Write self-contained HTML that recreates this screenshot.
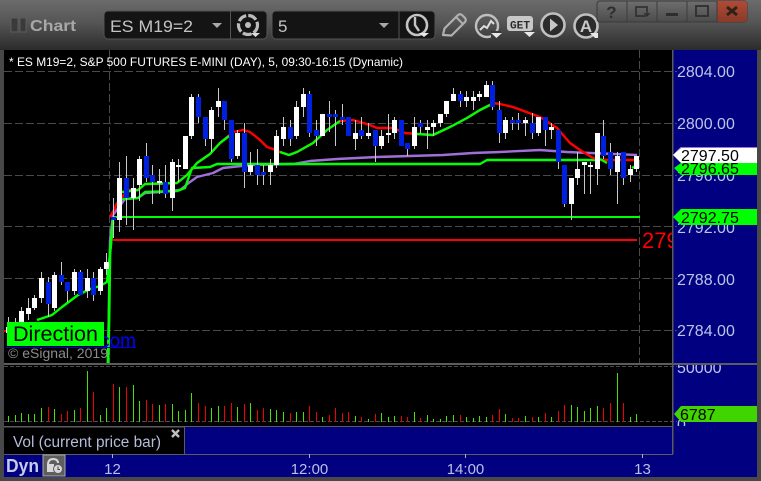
<!DOCTYPE html>
<html>
<head>
<meta charset="utf-8">
<style>
html,body{margin:0;padding:0;width:761px;height:481px;overflow:hidden;background:#3c3c3c}
svg{display:block;font-family:"Liberation Sans",sans-serif}
</style>
</head>
<body>
<svg id="s" xmlns="http://www.w3.org/2000/svg" width="761" height="481" viewBox="0 0 761 481">
<defs>
<linearGradient id="tb" x1="0" y1="0" x2="0" y2="1"><stop offset="0" stop-color="#6c6c6c"/><stop offset="0.45" stop-color="#555"/><stop offset="1" stop-color="#2b2b2b"/></linearGradient>
<linearGradient id="wb" x1="0" y1="0" x2="0" y2="1"><stop offset="0" stop-color="#6e6e6e"/><stop offset="1" stop-color="#4c4c4c"/></linearGradient>
<linearGradient id="cb" x1="0" y1="0" x2="0" y2="1"><stop offset="0" stop-color="#b24a34"/><stop offset="1" stop-color="#8a3a2a"/></linearGradient>
<clipPath id="cp"><rect x="4" y="50" width="668" height="313"/></clipPath>
<clipPath id="ax"><rect x="673" y="50" width="84" height="313"/></clipPath>
<clipPath id="ax2"><rect x="673" y="365" width="84" height="61"/></clipPath>
</defs>
<rect width="761" height="481" fill="#484848"/>
<rect x="0" y="0" width="761" height="50" fill="url(#tb)"/>
<!-- title -->
<rect x="11" y="18" width="7" height="14" fill="#3a3a3a" stroke="#5c5c5c"/>
<rect x="20" y="18" width="6" height="14" fill="#3a3a3a" stroke="#5c5c5c"/>
<text x="30" y="31" font-size="16" font-weight="bold" fill="#a8a8a8" textLength="46" lengthAdjust="spacingAndGlyphs">Chart</text>
<!-- symbol box -->
<rect x="104" y="11" width="163" height="28" rx="4" fill="#141414" stroke="#555"/>
<line x1="230.500" y1="11" x2="230.500" y2="39" stroke="#555"/>
<text x="110" y="32" font-size="17" fill="#c4c4c4" textLength="83" lengthAdjust="spacingAndGlyphs">ES M19=2</text>
<path d="M212 23h10l-5 5z" fill="#a8a8a8"/>
<circle cx="248" cy="25" r="9.500" fill="none" stroke="#bcbcbc" stroke-width="3.200" stroke-dasharray="9 2.200"/>
<circle cx="248" cy="25" r="3" fill="#bcbcbc"/>
<path d="M251 33h9l-4.500 4z" fill="#ddd"/>
<!-- interval box -->
<rect x="272" y="11" width="163" height="28" rx="4" fill="#141414" stroke="#555"/>
<line x1="399" y1="11" x2="399" y2="39" stroke="#555"/>
<text x="278" y="32" font-size="17" fill="#c4c4c4">5</text>
<path d="M379 23h10l-5 5z" fill="#a8a8a8"/>
<!-- clock -->
<circle cx="417" cy="25" r="10" fill="none" stroke="#c4c4c4" stroke-width="2.600"/>
<path d="M415 17v8l4 6" fill="none" stroke="#c4c4c4" stroke-width="2.400"/>
<path d="M419 33h10l-5 4z" fill="#e8e8e8"/>
<!-- pencil -->
<path d="M443 35l1.500-6.500L458 15q2-1.500 4 0l3 3q1.500 2 0 4L451.500 35.500z" fill="none" stroke="#b0b0b0" stroke-width="2.200" stroke-linejoin="round"/>
<path d="M456 17l7 7" stroke="#b0b0b0" stroke-width="2"/>
<!-- chart circle -->
<circle cx="487" cy="26" r="11" fill="none" stroke="#c0c0c0" stroke-width="2.400"/>
<path d="M480 30l4-4 3 2 4-7 3 3" fill="none" stroke="#ddd" stroke-width="2"/>
<rect x="491" y="31" width="10" height="7" fill="#3a3a3a"/>
<path d="M491 33h11l-5.500 5z" fill="#e8e8e8"/>
<!-- GET -->
<rect x="507" y="16" width="26" height="15" rx="3" fill="#c8c8c8"/>
<text x="510" y="28.500" font-size="11" font-weight="bold" font-family="Liberation Mono" fill="#2c2c2c" textLength="20" lengthAdjust="spacingAndGlyphs">GET</text>
<path d="M524 32h11l-5.500 5z" fill="#e8e8e8"/>
<!-- play -->
<circle cx="553" cy="25" r="11.500" fill="#2c2c2c" stroke="#c0c0c0" stroke-width="2.600"/>
<path d="M550 18.500l8 6.500-8 6.500z" fill="#c8c8c8"/>
<!-- A -->
<circle cx="586" cy="26" r="11.500" fill="#2c2c2c" stroke="#c0c0c0" stroke-width="2.600"/>
<text x="586" y="32" font-size="17" font-weight="bold" text-anchor="middle" fill="#c8c8c8">A</text>
<path d="M590 33h8v5h-3z" fill="#e8e8e8"/>
<!-- window buttons -->
<rect x="597" y="1" width="150" height="21" rx="3" fill="url(#wb)" stroke="#3a3a3a"/>
<path d="M717 1h27q3 0 3 3v15q0 3-3 3h-27z" fill="url(#cb)"/>
<path d="M627 1v21M657 1v21M687 1v21M717 1v21" stroke="#3c3c3c"/>
<text x="611.500" y="18" font-size="17" font-weight="bold" fill="#2e2e2e" text-anchor="middle">?</text>
<rect x="636" y="7" width="11" height="9" fill="none" stroke="#2e2e2e" stroke-width="1.600"/>
<path d="M643 13h8l-4 4z" fill="#2e2e2e" stroke="#555" stroke-width="0.500"/>
<rect x="666" y="13" width="12" height="3" fill="#2e2e2e"/>
<rect x="696" y="6" width="12" height="10" fill="none" stroke="#2e2e2e" stroke-width="1.800"/>
<path d="M727 7l10 8M737 7l-10 8" stroke="#2e2216" stroke-width="3"/>

<!-- chart -->
<rect x="4" y="50" width="669" height="313" fill="#000"/>
<rect x="673" y="50" width="84" height="404" fill="#000080"/>
<g id="grid" stroke="#4a4a4a" stroke-width="1" stroke-dasharray="8 3" shape-rendering="crispEdges">
<line x1="4" y1="71.500" x2="677" y2="71.500"/>
<line x1="4" y1="123.500" x2="677" y2="123.500"/>
<line x1="4" y1="175.500" x2="677" y2="175.500"/>
<line x1="4" y1="226.500" x2="677" y2="226.500"/>
<line x1="4" y1="278.500" x2="677" y2="278.500"/>
<line x1="4" y1="330.500" x2="677" y2="330.500"/>
<line x1="109.500" y1="50" x2="109.500" y2="363"/>
<line x1="639.500" y1="50" x2="639.500" y2="363"/>
</g>
<text x="9" y="66" font-size="12" fill="#ffffff" textLength="394" lengthAdjust="spacingAndGlyphs">* ES M19=2, S&amp;P 500 FUTURES E-MINI (DAY), 5, 09:30-16:15 (Dynamic)</text>
<g fill="none" stroke-linejoin="round" clip-path="url(#cp)">
<polyline stroke="#a070d8" stroke-width="2.400" points="108,363 109,300 110,240 113,215 122,203 125,199 138,198 145,193 160,192 180,190 190,182 197,177 213,173 223,168 250,165 293,164 310,161 337,159 377,157 410,156 443,155 473,153 500,152 540,150 567,152 637,155"/>
<polyline stroke="#00ff00" stroke-width="2.400" points="122,199 138,198 145,192 177,191 185,188 192,168 210,167 217,164 250,164 480,164 487,160 600,160"/>
<polyline stroke="#ff0000" stroke-width="2.400" points="110,217 115,208 117,203 128,190 138,190 145,184 177,183 187,175 197,163 210,154 220,143 233,132 243,130 250,132 260,140 267,147 273,149 280,152 289,155 297,152 313,143 327,130 340,121 353,120 370,125 377,128 393,128 405,133 417,134 433,135 450,127 467,118 480,110 493,103 500,104 513,107 540,117 557,128 570,143 580,150 593,158 600,160 637,160"/>
<polyline stroke="#00ff00" stroke-width="2.400" points="37,320 52,315 62,307 78,295 90,289 100,286 107,282 110,253 112,232 113,220"/>
<polyline stroke="#00ff00" stroke-width="2.400" points="122,192 138,190 145,184 177,183 187,175 197,163 210,154 220,143 229,136"/>
<polyline stroke="#00ff00" stroke-width="2.400" points="280,152 289,155 297,152 313,143 327,130 340,121"/>
<polyline stroke="#00ff00" stroke-width="2.400" points="417,134 433,135 450,127 467,118 480,110 490,105"/>
<polyline stroke="#00ff00" stroke-width="2.400" points="600,159 607,163"/>
<polyline stroke="#00ff00" stroke-width="2.400" points="632,168 637,165"/>
<polyline stroke="#00ff00" stroke-width="2.800" points="108,363 109,320 110,253 112,232 113,222"/>
<line x1="113" y1="217" x2="640" y2="217" stroke="#00ff00" stroke-width="2"/>
<line x1="113" y1="240" x2="637" y2="240" stroke="#ff0000" stroke-width="2"/>
</g>
<rect x="4" y="330" width="3" height="2" fill="#f00000"/>
<g id="candles" shape-rendering="crispEdges"></g>
<text x="642" y="248" font-size="22" fill="#ff0000" clip-path="url(#cp)">2792.75</text>
<!-- Direction -->
<text x="136" y="347" font-size="19" fill="#0000ff" text-anchor="end">com</text>
<rect x="6" y="347" width="130" height="1" fill="#0000e0"/>
<rect x="7" y="322" width="97" height="24" fill="#00ff00"/>
<text x="13" y="341" font-size="21.500" fill="#000" textLength="85" lengthAdjust="spacingAndGlyphs">Direction</text>
<text x="8" y="358" font-size="14" fill="#8c8c8c" textLength="100" lengthAdjust="spacingAndGlyphs">© eSignal, 2019</text>
<!-- axis -->
<rect x="672" y="50" width="1.500" height="404" fill="#5c5c5c"/>
<g font-size="16" fill="#bcc4e8" clip-path="url(#ax)">
<text x="677" y="77">2804.00</text>
<text x="677" y="129">2800.00</text>
<text x="677" y="181">2796.00</text>
<text x="677" y="233">2792.00</text>
<text x="677" y="285">2788.00</text>
<text x="677" y="336">2784.00</text>
</g>
<path d="M757 163H681L674 168L681 175H757z" fill="#00ff00"/>
<text x="681" y="174" font-size="16" fill="#000">2796.65</text>
<path d="M757 147H681L673 155L681 163H757z" fill="#fff"/>
<path d="M757 147.500H681L677 151" fill="none" stroke="#a070d8" stroke-width="1"/>
<text x="681" y="161" font-size="16" fill="#000">2797.50</text>
<path d="M757 209H681L673 217L681 225H757z" fill="#00ff00"/>
<text x="681" y="223" font-size="16" fill="#000">2792.75</text>
<!-- pane separator -->
<rect x="4" y="363" width="753" height="2" fill="#5c5c5c"/>
<rect x="4" y="365" width="669" height="61" fill="#000"/>
<rect x="673" y="365" width="84" height="89" fill="#000080"/>
<g stroke="#4a4a4a" stroke-dasharray="4 2" shape-rendering="crispEdges">
<line x1="4" y1="366.500" x2="677" y2="366.500"/>
<line x1="4" y1="421.500" x2="677" y2="421.500"/>
</g>
<g id="vols" shape-rendering="crispEdges"></g>
<g font-size="16" fill="#bcc4e8" clip-path="url(#ax2)">
<text x="677" y="373">50000</text>
<text x="677" y="430">0</text>
</g>
<rect x="672" y="365" width="1.500" height="89" fill="#5c5c5c"/>
<path d="M757 406H681L674 414L681 422H757z" fill="#40d400"/>
<text x="680" y="420" font-size="16" fill="#000">6787</text>
<!-- Vol legend -->
<rect x="4" y="426" width="181" height="28" fill="#000"/>
<rect x="4" y="426" width="669" height="1.500" fill="#5c5c5c"/>
<rect x="184" y="426" width="1" height="28" fill="#5c5c5c"/>
<rect x="185" y="427" width="487" height="27" fill="#000080"/>
<text x="13" y="447" font-size="15.300" fill="#b4bcd8" textLength="148" lengthAdjust="spacingAndGlyphs">Vol (current price bar)</text>
<path d="M172 430l7 7M179 430l-7 7" stroke="#c0c0c0" stroke-width="2.400"/>
<!-- time axis -->
<rect x="4" y="454" width="753" height="23" fill="#000080"/>
<rect x="4" y="454" width="669" height="1" fill="#5c5c5c"/>
<text x="6" y="472" font-size="18" font-weight="bold" fill="#c4cce8" textLength="33" lengthAdjust="spacingAndGlyphs">Dyn</text>
<rect x="43" y="455" width="22" height="21" fill="#5e5e5e" stroke="#a8a8a8"/>
<path d="M48 472v-7M48 465q0-6 5-6t5 4" fill="none" stroke="#d8d8d8" stroke-width="2"/>
<rect x="47" y="464" width="7" height="8" fill="#d8d8d8"/>
<circle cx="58" cy="469" r="4.500" fill="#d8d8d8" stroke="#5e5e5e"/>
<path d="M58 466.500v3h2" fill="none" stroke="#444"/>
<g stroke="#a8b0d8" shape-rendering="crispEdges">
<line x1="112.500" y1="454" x2="112.500" y2="458"/>
<line x1="309.500" y1="454" x2="309.500" y2="458"/>
<line x1="465.500" y1="454" x2="465.500" y2="458"/>
<line x1="642.500" y1="454" x2="642.500" y2="458"/>
</g>
<g font-size="15" fill="#b8c0e4" text-anchor="middle">
<text x="112.500" y="474">12</text>
<text x="309.500" y="474">12:00</text>
<text x="465.500" y="474">14:00</text>
<text x="642.500" y="474">13</text>
</g>
</svg>
<script>
(function(){
var NS="http://www.w3.org/2000/svg";
function r(p,x,y,w,h,f){var e=document.createElementNS(NS,"rect");e.setAttribute("x",x);e.setAttribute("y",y);e.setAttribute("width",w);e.setAttribute("height",h);e.setAttribute("fill",f);p.appendChild(e);}
var A=[[322,338,290,370,'w'],[318,323,295,368,'w'],[273,320,262,330,'w'],[264,282,235,300,'w'],[234,264,225,270,'w'],[174,234,155,250,'w'],[186,252,170,290,'b'],[165,264,155,272,'w'],[165,186,126,195,'b'],[186,213,186,245,'b'],[156,213,148,225,'w'],[156,225,150,225,'b'],[174,213,148,235,'w'],[174,225,156,243,'b'],[147,213,140,225,'w'],[126,147,100,165,'w']];
var B=[[426,435,370,490,'b'],[309,435,262,470,'w'],[309,369,243,450,'b'],[339,369,309,465,'w'],[252,330,243,378,'w'],[243,309,205,320,'b'],[300,321,270,387,'b'],[318,324,282,357,'w'],[321,357,270,369,'b'],[261,369,252,408,'w'],[270,276,252,320,'w'],[183,282,183,282,'w'],[66,183,57,192,'w'],[66,126,57,145,'b'],[126,192,126,213,'b'],[105,192,96,232,'w'],[78,96,39,126,'w'],[78,135,78,165,'b'],[135,252,135,260,'b'],[174,243,165,252,'w'],[174,291,145,340,'b'],
[270,291,230,300,'w'],[270,300,222,330,'b'],[291,300,270,330,'b'],[270,291,252,330,'w'],[183,270,165,280,'w'],[156,192,126,213,'w'],[156,192,135,213,'b'],[96,183,78,192,'w'],[57,96,39,125,'w'],[57,174,48,185,'b'],[165,183,135,213,'b'],[117,183,117,183,'w'],[117,126,78,170,'b'],[117,126,105,213,'b'],[126,135,87,150,'b'],[126,183,126,183,'b'],[174,192,135,225,'w'],[165,183,126,192,'b'],[174,183,144,192,'w'],[165,213,165,261,'b'],[183,213,165,222,'w'],[174,180,117,204,'w'],[135,174,126,192,'w'],[135,213,135,213,'b'],[204,222,204,243,'b'],[156,213,126,222,'w'],[144,156,135,175,'b'],[156,165,135,222,'w'],[144,156,135,183,'w'],[117,144,117,156,'w'],[78,117,78,126,'w'],[57,78,39,78,'w'],[57,78,48,96,'b'],[66,78,48,96,'w'],[66,78,48,105,'w'],[57,66,48,78,'w'],[30,66,18,66,'w'],[30,96,18,105,'b'],[105,174,78,205,'b'],
[135,174,126,192,'w'],[135,144,126,165,'b'],[135,144,115,165,'b'],[135,144,126,183,'w'],[144,174,115,192,'b'],[126,174,126,183,'w'],[126,165,126,213,'b'],[156,165,145,192,'w'],[165,261,165,282,'b'],[270,387,270,396,'b'],[309,387,309,435,'w'],[282,309,231,330,'w'],[261,270,261,357,'w'],[270,276,261,357,'w'],[174,282,174,330,'w'],[183,243,135,252,'b'],[231,282,205,300,'b'],[243,291,231,387,'w'],[231,309,231,330,'b'],[282,300,270,320,'w'],[243,282,243,291,'w']];
var c=document.getElementById("candles"),all=[],i;
for(i=0;i<A.length;i++)all.push([A[i],220]);
for(i=0;i<B.length;i++)all.push([B[i],75]);
for(i=0;i<all.length;i++){
 var d=all[i][0],o=all[i][1],x=Math.round(8.3+6.54*i);
 var y=function(z){return Math.round(o+z/3);};
 r(c,x,y(d[2]),1,Math.max(1,y(d[3])-y(d[2])),"#c8c8c8");
 r(c,x-2,y(d[0]),5,Math.max(1,y(d[1])-y(d[0])),d[4]=='w'?"#ffffff":"#0020e0");
}
var V="168g 166g 160g 162g 162g 144g 141r 147g 162r 153r 150g 144r 33g 96r 165g 144g 72r 81g 81r 75g 123g 120r 132r 135g 132r 132g 153g 150g 99g 129r 138r 144g 138g 138r 129r 141g 132r 129g 150r 144r 147g 150g 156g 159r 156g 156g 138r 156r 171g 165r 144r 159r 156r 168g 171r 177g 162r 159g 171g 168g 168r 171r 156g 174r 165g 177g 177g 168g 165g 165r 171g 174g 168g 171g 165r 147r 162g 174r 174r 168g 171r 171g 159r 171g 153r 135r 135g 141g 153g 144g 138g 144r 129r 39g 129r 171g 162g".split(" ");
var v=document.getElementById("vols");
for(i=0;i<V.length;i++){
 var t=parseInt(V[i],10),col=V[i].slice(-1)=='g'?"#48e000":"#f00000",yy=Math.round(360+t/3);
 r(v,Math.round(8.3+6.54*i),yy,1,422-yy,col);
}
})();
</script>
</body>
</html>
